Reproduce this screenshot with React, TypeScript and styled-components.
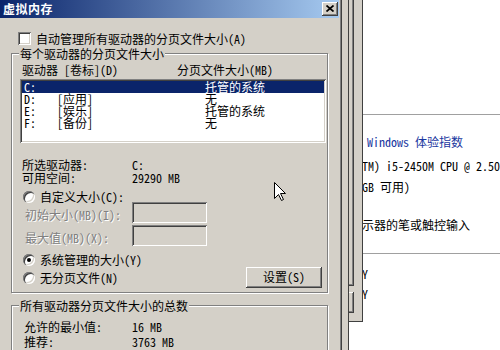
import React from "react";
import styled, { createGlobalStyle, css } from "styled-components";

const FACE = `"Noto Sans Mono CJK SC", "Noto Sans CJK SC", "Noto Sans CJK JP", monospace`;

const Global = createGlobalStyle`
  html, body { margin: 0; padding: 0; background: #ffffff; }
  body { font-family: ${FACE}; font-size: 12px; color: #000; }
  #root { width: 500px; height: 350px; }
  * { box-sizing: border-box; }
`;

const raised = css`
  background: #d4d0c8;
  box-shadow: inset -1px -1px 0 #404040, inset 1px 1px 0 #ffffff,
    inset -2px -2px 0 #808080, inset 2px 2px 0 #d4d0c8;
`;

const sunken = css`
  box-shadow: inset 1px 1px 0 #808080, inset -1px -1px 0 #ffffff,
    inset 2px 2px 0 #404040, inset -2px -2px 0 #d4d0c8;
`;

const Desktop = styled.div`
  position: relative;
  width: 500px;
  height: 350px;
  overflow: hidden;
  background: #ffffff;
`;

/* ---------- background window: System control panel ---------- */
const ControlPanel = styled.div`
  position: absolute;
  left: 363px;
  top: 0;
  width: 137px;
  height: 350px;
  background: #ffffff;
  overflow: hidden;
  display: flex;
  flex-direction: column;
  white-space: nowrap;
`;

const Divider = styled.div<{ $top: number }>`
  height: 1px;
  background: #a0a0a0;
  margin-top: ${(p) => p.$top}px;
  flex: none;
`;

const PanelLine = styled.div<{ $top: number; $shift: number; $link?: boolean }>`
  height: 12px;
  line-height: 12px;
  flex: none;
  margin-top: ${(p) => p.$top}px;
  margin-left: ${(p) => p.$shift}px;
  color: ${(p) => (p.$link ? "#1a37a0" : "#000")};
`;

/* ---------- background dialogs ---------- */
const SysProps = styled.div`
  position: absolute;
  left: 0;
  top: 0;
  width: 363px;
  height: 322px;
  background: #d4d0c8;
  box-shadow: inset -1px -1px 0 #404040;
  display: flex;
  flex-direction: column;
  padding: 0 9px 9px 0;
`;

const TabPage = styled.div`
  flex: 1;
  border-right: 1px solid #404040;
  border-bottom: 1px solid #404040;
  box-shadow: inset -1px -1px 0 #808080;
`;

const BackButtonRow = styled.div`
  display: flex;
  justify-content: flex-end;
  margin-top: 6px;
`;

const BackButton = styled.div`
  width: 75px;
  height: 21px;
  ${raised};
`;

const PerfOptions = styled.div`
  position: absolute;
  left: 0;
  top: 0;
  width: 349px;
  height: 350px;
  background: #d4d0c8;
  box-shadow: inset -1px 0 0 #404040;
`;

/* ---------- front dialog ---------- */
const Dialog = styled.div`
  position: absolute;
  left: 0;
  top: 0;
  width: 342px;
  height: 350px;
  overflow: hidden;
  background: #d4d0c8;
  box-shadow: inset -1px 0 0 #404040, inset -2px 0 0 #808080;
  padding-right: 3px;
  display: flex;
  flex-direction: column;
`;

const TitleBar = styled.div`
  height: 18px;
  flex: none;
  display: flex;
  align-items: center;
  justify-content: space-between;
  padding: 0 1px 0 3px;
  background: linear-gradient(to right, #0a246a, #a6caf0);
`;

const TitleText = styled.span`
  color: #ffffff;
  font-weight: bold;
  font-size: 12px;
  line-height: 14px;
  letter-spacing: 0.5px;
`;

const CloseButton = styled.div`
  width: 16px;
  height: 14px;
  ${raised};
  display: flex;
  align-items: center;
  justify-content: center;
  padding: 0 1px 1px 0;
`;

const Body = styled.div`
  display: flex;
  flex-direction: column;
  padding-left: 11px;
`;

const CheckRow = styled.label`
  display: flex;
  align-items: center;
  gap: 5px;
  height: 13px;
  margin: 14px 0 0 7px;
  line-height: 13px;
`;

const CheckBox = styled.span`
  width: 13px;
  height: 13px;
  background: #ffffff;
  ${sunken};
  flex: none;
`;

const GroupBox = styled.div<{ $top: number; $pad: string }>`
  position: relative;
  width: 317px;
  margin-top: ${(p) => p.$top}px;
  border: 1px solid #808080;
  box-shadow: inset 1px 1px 0 #ffffff, 1px 1px 0 #ffffff;
  padding: ${(p) => p.$pad};
  display: flex;
  flex-direction: column;
  flex: none;
`;

const GroupCaption = styled.span`
  position: absolute;
  top: -7px;
  left: 7px;
  padding: 0 1px;
  line-height: 13px;
  height: 13px;
  background: #d4d0c8;
`;

const ColumnHeader = styled.div`
  display: grid;
  grid-template-columns: 155px 1fr;
  height: 12px;
  line-height: 12px;
  margin-left: 2px;
`;

const ListBox = styled.div`
  margin-top: 3px;
  height: 64px;
  background: #ffffff;
  ${sunken};
  padding: 2px;
  display: flex;
  flex-direction: column;
`;

const ListRow = styled.div<{ $selected?: boolean }>`
  display: grid;
  grid-template-columns: 33px 148px 1fr;
  height: 12px;
  line-height: 12px;
  padding-left: 2px;
  white-space: nowrap;
  background: ${(p) => (p.$selected ? "#0a246a" : "transparent")};
  color: ${(p) => (p.$selected ? "#ffffff" : "#000")};
`;

const InfoRow = styled.div<{ $top: number; $indent: number; $col: number }>`
  display: grid;
  grid-template-columns: ${(p) => p.$col}px 1fr;
  height: 13px;
  line-height: 13px;
  margin: ${(p) => p.$top}px 0 0 ${(p) => p.$indent}px;
  white-space: nowrap;
`;

const RadioRow = styled.label<{ $top: number }>`
  display: flex;
  align-items: center;
  gap: 5px;
  height: 12px;
  line-height: 12px;
  margin: ${(p) => p.$top}px 0 0 3px;
  white-space: nowrap;
`;

const Radio = styled.span<{ $checked?: boolean }>`
  position: relative;
  width: 12px;
  height: 12px;
  flex: none;
  border-radius: 50%;
  background: #ffffff;
  box-shadow: inset 1px 1px 0 #808080, inset 2px 2px 0 #404040,
    inset -1px -1px 0 #ffffff, inset -2px -2px 0 #d4d0c8;
  ${(p) =>
    p.$checked &&
    css`
      &::after {
        content: "";
        position: absolute;
        left: 4px;
        top: 4px;
        width: 4px;
        height: 4px;
        border-radius: 50%;
        background: #000;
      }
    `}
`;

const EditRow = styled.div<{ $top: number }>`
  display: grid;
  grid-template-columns: 107px 75px;
  align-items: center;
  height: 21px;
  margin: ${(p) => p.$top}px 0 0 5px;
`;

const DisabledLabel = styled.span`
  color: #808080;
  text-shadow: 1px 1px 0 #ffffff;
  line-height: 12px;
  padding-top: 4px;
  white-space: nowrap;
`;

const EditBox = styled.div`
  height: 21px;
  background: #d4d0c8;
  ${sunken};
`;

const LastRow = styled.div`
  display: flex;
  align-items: center;
  height: 21px;
  margin-top: 1px;
  padding-right: 4px;
`;

const PushButton = styled.div`
  margin-left: auto;
  width: 76px;
  height: 21px;
  ${raised};
  display: flex;
  align-items: center;
  justify-content: center;
  line-height: 12px;
  padding-bottom: 1px;
`;

const Cursor = styled.svg`
  position: absolute;
  left: 274px;
  top: 182px;
`;

export default function App() {
  return (
    <>
      <Global />
      <Desktop>
        <ControlPanel>
          <Divider $top={114} />
          <PanelLine $top={21} $shift={4} $link>
            Windows 体验指数
          </PanelLine>
          <PanelLine $top={12} $shift={-7}>
            (TM) i5-2450M CPU @ 2.50GHz
          </PanelLine>
          <PanelLine $top={9} $shift={-37}>
            (2.92 GB 可用)
          </PanelLine>
          <PanelLine $top={26} $shift={-13}>
            显示器的笔或触控输入
          </PanelLine>
          <Divider $top={22} />
          <PanelLine $top={14} $shift={-1}>
            Y
          </PanelLine>
          <PanelLine $top={8} $shift={-1}>
            Y
          </PanelLine>
        </ControlPanel>

        <SysProps>
          <TabPage />
          <BackButtonRow>
            <BackButton />
          </BackButtonRow>
        </SysProps>

        <PerfOptions />

        <Dialog>
          <TitleBar>
            <TitleText>虚拟内存</TitleText>
            <CloseButton>
              <svg width="8" height="7" viewBox="0 0 8 7">
                <path d="M0.5 0.5 L7.5 6.5 M7.5 0.5 L0.5 6.5" stroke="#000" strokeWidth="1.7" fill="none" />
              </svg>
            </CloseButton>
          </TitleBar>
          <Body>
            <CheckRow>
              <CheckBox />
              <span>自动管理所有驱动器的分页文件大小(A)</span>
            </CheckRow>

            <GroupBox $top={8} $pad="10px 1px 4px 8px">
              <GroupCaption>每个驱动器的分页文件大小</GroupCaption>
              <ColumnHeader>
                <span>驱动器 [卷标](D)</span>
                <span>分页文件大小(MB)</span>
              </ColumnHeader>
              <ListBox>
                <ListRow $selected>
                  <span>C:</span>
                  <span></span>
                  <span>托管的系统</span>
                </ListRow>
                <ListRow>
                  <span>D:</span>
                  <span>[应用]</span>
                  <span>无</span>
                </ListRow>
                <ListRow>
                  <span>E:</span>
                  <span>[娱乐]</span>
                  <span>托管的系统</span>
                </ListRow>
                <ListRow>
                  <span>F:</span>
                  <span>[备份]</span>
                  <span>无</span>
                </ListRow>
              </ListBox>
              <InfoRow $top={15} $indent={2} $col={110}>
                <span>所选驱动器:</span>
                <span>C:</span>
              </InfoRow>
              <InfoRow $top={0} $indent={2} $col={110}>
                <span>可用空间:</span>
                <span>29290 MB</span>
              </InfoRow>
              <RadioRow $top={7}>
                <Radio />
                <span>自定义大小(C):</span>
              </RadioRow>
              <EditRow $top={-1}>
                <DisabledLabel>初始大小(MB)(I):</DisabledLabel>
                <EditBox />
              </EditRow>
              <EditRow $top={2}>
                <DisabledLabel>最大值(MB)(X):</DisabledLabel>
                <EditBox />
              </EditRow>
              <RadioRow $top={8}>
                <Radio $checked />
                <span>系统管理的大小(Y)</span>
              </RadioRow>
              <LastRow>
                <RadioRow $top={0}>
                  <Radio />
                  <span>无分页文件(N)</span>
                </RadioRow>
                <PushButton>设置(S)</PushButton>
              </LastRow>
            </GroupBox>

            <GroupBox $top={12} $pad="14px 1px 10px 8px">
              <GroupCaption>所有驱动器分页文件大小的总数</GroupCaption>
              <InfoRow $top={0} $indent={4} $col={108}>
                <span>允许的最小值:</span>
                <span>16 MB</span>
              </InfoRow>
              <InfoRow $top={2} $indent={4} $col={108}>
                <span>推荐:</span>
                <span>3763 MB</span>
              </InfoRow>
              <InfoRow $top={2} $indent={4} $col={108}>
                <span>当前已分配:</span>
                <span>4096 MB</span>
              </InfoRow>
            </GroupBox>
          </Body>
        </Dialog>

        <Cursor width="13" height="20" viewBox="0 0 13 20">
          <polygon
            points="0.5,0.5 0.5,16.5 4.5,12.5 7.5,18.5 9.5,17.5 6.5,11.5 11.5,11.5"
            fill="#ffffff"
            stroke="#000000"
            strokeWidth="1"
          />
        </Cursor>
      </Desktop>
    </>
  );
}
